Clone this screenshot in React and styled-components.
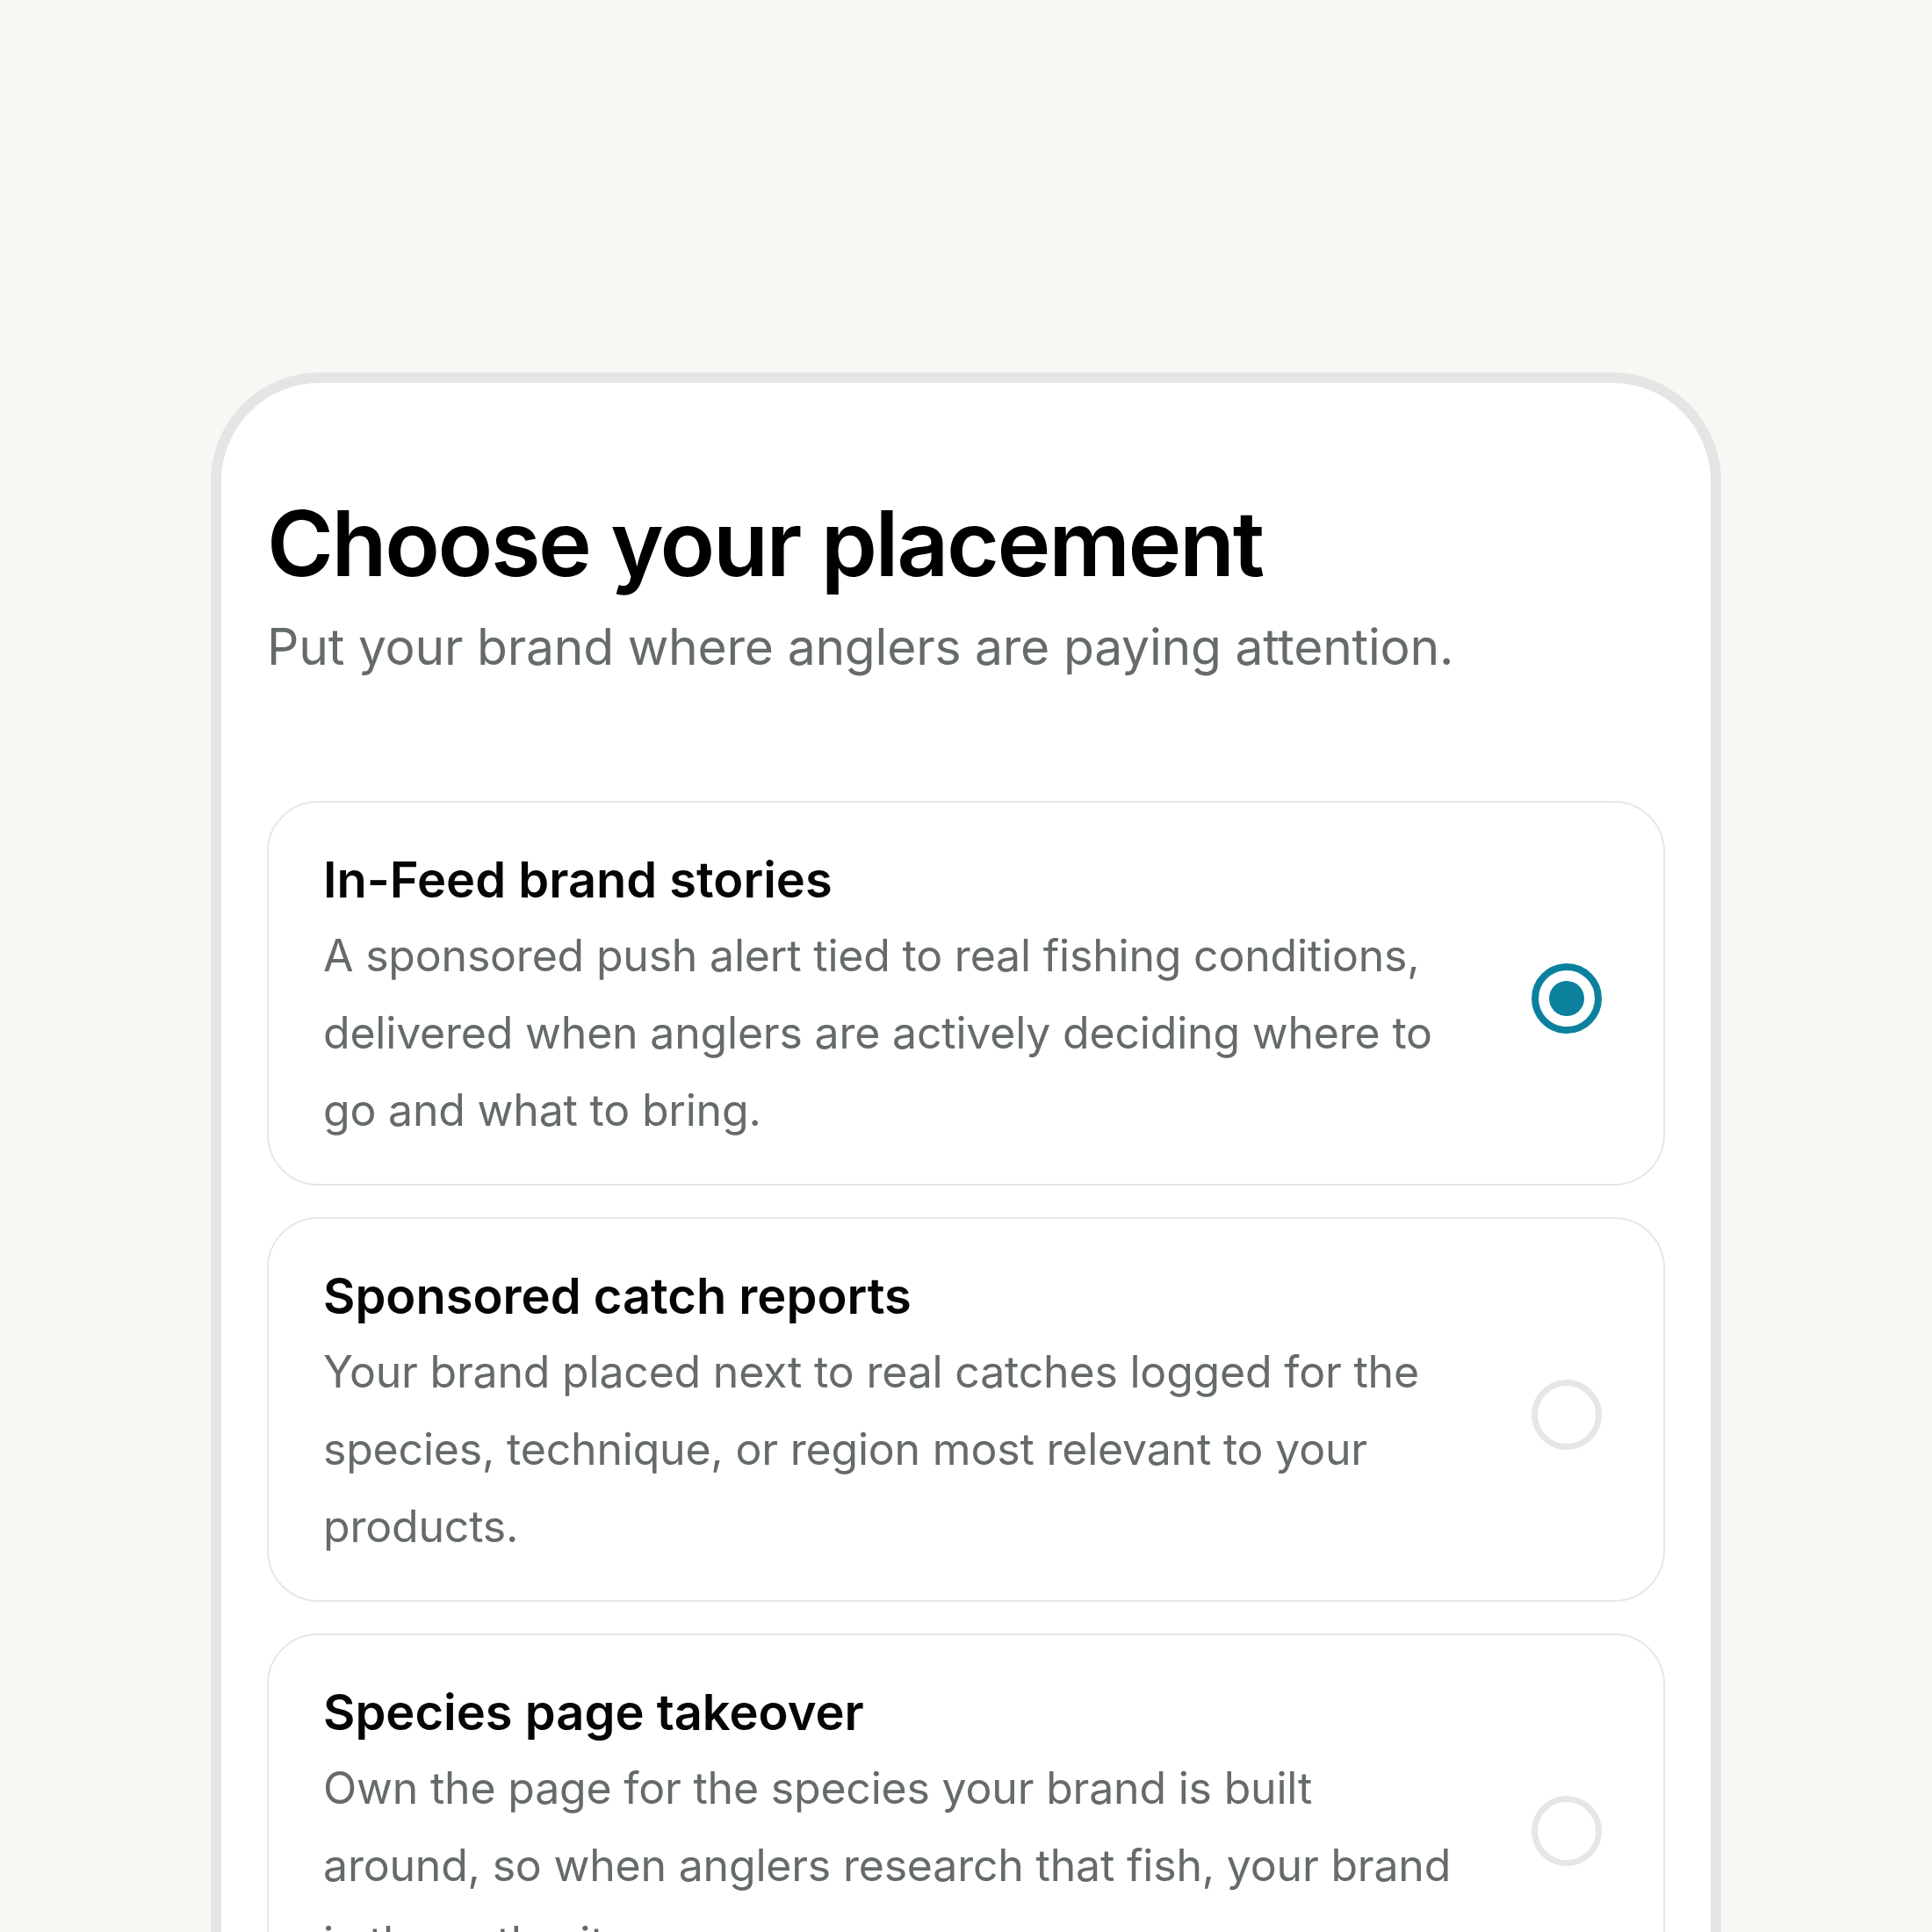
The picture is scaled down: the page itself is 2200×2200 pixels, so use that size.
import React, { useState } from 'react'
import styled, { createGlobalStyle } from 'styled-components'

const GlobalStyle = createGlobalStyle`
  * {
    box-sizing: border-box;
  }
  body {
    margin: 0;
    background: #f9f7f4;
    font-family: Inter, "Noto Sans", sans-serif;
    -webkit-font-smoothing: antialiased;
  }
`;

const Page = styled.div`
  padding-top: 424px;
  display: flex;
  justify-content: center;
`;

const Phone = styled.div`
  width: 1720px;
  min-height: 2000px;
  background: #ffffff;
  border: 12px solid #e4e6e6;
  border-radius: 124px 124px 0 0;
  padding: 121px 52px 80px;
`;

const Title = styled.h1`
  margin: 0;
  font-size: 103px;
  line-height: 1.2;
  font-weight: 600;
  letter-spacing: -0.023em;
  color: #000000;
`;

const Subtitle = styled.p`
  margin: 16px 0 0;
  font-size: 57px;
  line-height: 1.4;
  font-weight: 400;
  letter-spacing: -0.004em;
  color: #656a6a;
`;

const Options = styled.div`
  margin-top: 136px;
  display: flex;
  flex-direction: column;
  gap: 36px;
`;

const Card = styled.label`
  display: flex;
  align-items: center;
  gap: 80px;
  padding: 52px 70px 40px 62px;
  border: 2px solid #e6e7e7;
  border-radius: 58px;
  background: #ffffff;
  cursor: pointer;
`;

const Texts = styled.div`
  flex: 1;
  min-width: 0;
`;

const CardTitle = styled.div`
  font-size: 56px;
  line-height: 1.3;
  font-weight: 600;
  letter-spacing: 0;
  color: #050505;
`;

const CardText = styled.div`
  margin-top: 5px;
  font-size: 50px;
  line-height: 88px;
  letter-spacing: -0.004em;
  color: #656a6a;
`;

const Radio = styled.span`
  flex: none;
  width: 80px;
  height: 80px;
  border-radius: 50%;
  border: ${(props) => (props.checked ? '8px solid #0b819e' : '7px solid #e6e6e6')};
  display: flex;
  align-items: center;
  justify-content: center;

  &::after {
    content: '';
    width: 40px;
    height: 40px;
    border-radius: 50%;
    background: #0b819e;
    display: ${(props) => (props.checked ? 'block' : 'none')};
  }
`;

const placements = [
  {
    id: 'feed',
    title: 'In-Feed brand stories',
    text: 'A sponsored push alert tied to real fishing conditions, delivered when anglers are actively deciding where to go and what to bring.',
  },
  {
    id: 'catch',
    title: 'Sponsored catch reports',
    text: 'Your brand placed next to real catches logged for the species, technique, or region most relevant to your products.',
  },
  {
    id: 'species',
    title: 'Species page takeover',
    text: 'Own the page for the species your brand is built around, so when anglers research that fish, your brand is the authority.',
  },
];

const App = () => {
  const [selected, setSelected] = useState('feed');

  return (
    <Page>
      <GlobalStyle />
      <Phone>
        <Title>Choose your placement</Title>
        <Subtitle>Put your brand where anglers are paying attention.</Subtitle>
        <Options>
          {placements.map((p) => (
            <Card key={p.id} onClick={() => setSelected(p.id)}>
              <Texts>
                <CardTitle>{p.title}</CardTitle>
                <CardText>{p.text}</CardText>
              </Texts>
              <Radio checked={selected === p.id} />
            </Card>
          ))}
        </Options>
      </Phone>
    </Page>
  )
}

export default App
